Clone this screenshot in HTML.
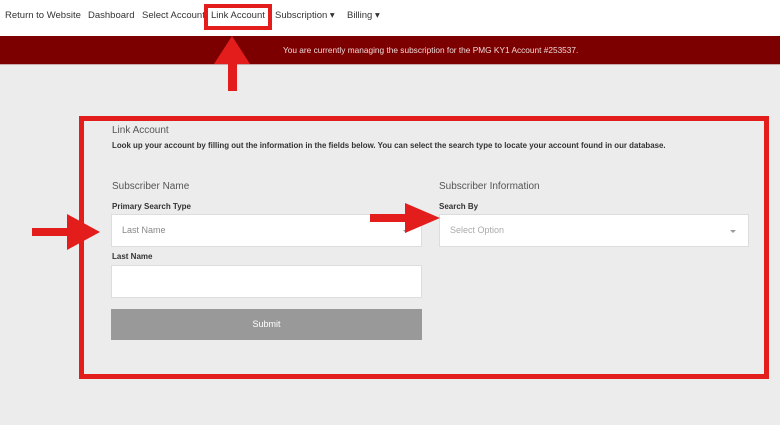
<!DOCTYPE html>
<html><head><style>
body{margin:0;width:780px;height:425px;position:relative;background:#ececec;font-family:"Liberation Sans",sans-serif;overflow:hidden}
.nav{position:absolute;left:0;top:0;width:780px;height:36px;background:#fff}
.nav span{position:absolute;top:10px;font-size:9.5px;color:#333;white-space:nowrap}
.bar{position:absolute;left:0;top:36px;width:780px;height:28px;background:#7d0000;border-bottom:1px solid #c9a9a9}
.bar span{position:absolute;left:283px;top:9px;font-size:8.3px;color:#f0d8d8;white-space:nowrap}
.abs{position:absolute}
.t{position:absolute;white-space:nowrap;color:#555}
.box{position:absolute;background:#fff;border:1px solid #ddd;box-sizing:border-box}
.ph{position:absolute;left:10px;top:10px;font-size:9px;color:#888}
.car{position:absolute;right:12px;top:15px;width:0;height:0;border-left:3px solid transparent;border-right:3px solid transparent;border-top:3px solid #999}
</style></head><body>
<div class="nav">
<span style="left:5px">Return to Website</span>
<span style="left:88px">Dashboard</span>
<span style="left:142px">Select Account</span>
<span style="left:211px">Link Account</span>
<span style="left:275px">Subscription ▾</span>
<span style="left:347px">Billing ▾</span>
</div>
<div class="abs" style="left:204px;top:4px;width:60px;height:18px;border:4px solid #e31c1c"></div>
<div class="bar"><span>You are currently managing the subscription for the PMG KY1 Account #253537.</span></div>

<div class="abs" style="left:79px;top:116px;width:680px;height:253px;border:5px solid #e31c1c"></div>

<div class="t" style="left:112px;top:125px;font-size:10px">Link Account</div>
<div class="t" style="left:112px;top:141px;font-size:7.9px;font-weight:bold;color:#333">Look up your account by filling out the information in the fields below. You can select the search type to locate your account found in our database.</div>

<div class="t" style="left:112px;top:181px;font-size:10px">Subscriber Name</div>
<div class="t" style="left:112px;top:202px;font-size:8px;font-weight:bold;color:#333">Primary Search Type</div>
<div class="box" style="left:111px;top:214px;width:311px;height:33px"><span class="ph">Last Name</span><div class="car"></div></div>
<div class="t" style="left:112px;top:252px;font-size:8px;font-weight:bold;color:#333">Last Name</div>
<div class="box" style="left:111px;top:265px;width:311px;height:33px"></div>
<div class="abs" style="left:111px;top:309px;width:311px;height:31px;background:#999;color:#fff;font-size:9px;text-align:center;line-height:31px">Submit</div>

<div class="t" style="left:439px;top:181px;font-size:10px">Subscriber Information</div>
<div class="t" style="left:439px;top:202px;font-size:8px;font-weight:bold;color:#333">Search By</div>
<div class="box" style="left:439px;top:214px;width:310px;height:33px"><span class="ph" style="color:#aaa">Select Option</span><div class="car"></div></div>

<svg class="abs" style="left:0;top:0" width="780" height="425">
<g fill="#e31c1c">
<polygon points="232,36 250,64 237,64 237,91 228,91 228,64 214,64"/>
<polygon points="32,228 67,228 67,214 100,232 67,250 67,236 32,236"/>
<polygon points="370,214 405,214 405,203 440,218 405,233 405,222 370,222"/>
</g>
</svg>
</body></html>
